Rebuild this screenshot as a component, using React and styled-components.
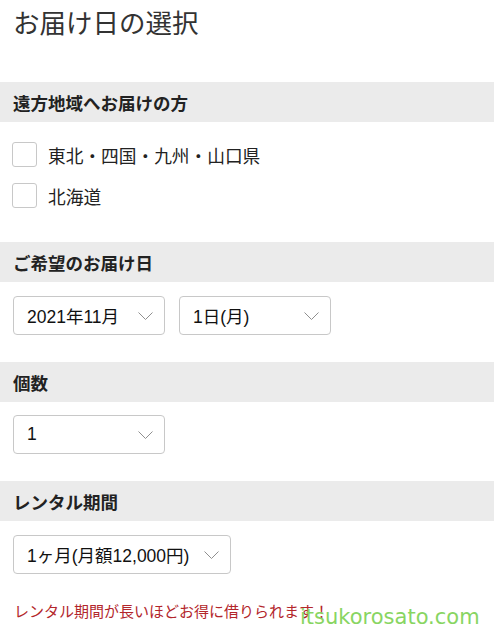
import React from "react";
import styled, { createGlobalStyle } from "styled-components";

const Global = createGlobalStyle`
  html, body { margin: 0; padding: 0; background: #fff; }
  body { font-family: "Noto Sans CJK JP", "Noto Sans", sans-serif; color: #222; }
  * { box-sizing: border-box; }
`;

const Page = styled.div`
  position: relative;
  width: 494px;
  height: 640px;
  overflow: hidden;
  background: #fff;
`;

const Title = styled.h1`
  margin: 0;
  height: 82px;
  padding: 7px 0 0 13px;
  font-size: 26.5px;
  line-height: 30px;
  font-weight: 400;
  color: #333;
  font-family: "Noto Sans CJK JP", sans-serif;
`;

const Section = styled.section`
  display: flex;
  flex-direction: column;
`;

const Header = styled.div`
  height: 40px;
  background: #ebebeb;
  display: flex;
  align-items: center;
  padding-left: 13px;
  font-size: 17.5px;
  font-weight: 700;
  color: #222;
`;

const Body = styled.div`
  padding: ${(p) => p.$pad || "14px 13px 27px"};
  display: flex;
  flex-direction: ${(p) => (p.$column ? "column" : "row")};
  gap: ${(p) => p.$gap || "14px"};
`;

const CheckRow = styled.label`
  display: flex;
  align-items: center;
  gap: 11px;
  height: 25px;
  font-size: 17.7px;
  color: #222;
`;

const Box = styled.span`
  width: 25px;
  height: 25px;
  border: 1px solid #c8c8c8;
  border-radius: 3px;
  background: #fff;
  flex: none;
`;

const Select = styled.div`
  width: ${(p) => p.$w}px;
  height: 39px;
  border: 1px solid #c8c8c8;
  border-radius: 4px;
  display: flex;
  align-items: center;
  justify-content: space-between;
  padding: 0 11px 0 13px;
  font-family: "Liberation Sans", "Noto Sans CJK JP", sans-serif;
  font-size: 17.5px;
  color: #111;
  background: #fff;
`;

const Note = styled.p`
  margin: 0;
  padding: 27px 0 0 14px;
  font-size: 15px;
  line-height: 20px;
  color: #b3262b;
`;

const Watermark = styled.div`
  position: absolute;
  left: 300px;
  top: 605px;
  font-family: "DejaVu Sans", sans-serif;
  font-size: 21px;
  color: #88d562;
`;

const Chevron = () => (
  <svg width="15" height="8" viewBox="0 0 15 8" fill="none">
    <polyline points="0.5,0.5 7.5,7.5 14.5,0.5" stroke="#8f8f8f" strokeWidth="1" />
  </svg>
);

export default function App() {
  return (
    <>
      <Global />
      <Page>
        <Title>お届け日の選択</Title>
        <Section>
          <Header>遠方地域へお届けの方</Header>
          <Body $column $pad="20px 12px 34px" $gap="16px">
            <CheckRow>
              <Box />
              東北・四国・九州・山口県
            </CheckRow>
            <CheckRow>
              <Box />
              北海道
            </CheckRow>
          </Body>
        </Section>
        <Section>
          <Header>ご希望のお届け日</Header>
          <Body>
            <Select $w={152}>
              2021年11月
              <Chevron />
            </Select>
            <Select $w={152}>
              1日(月)
              <Chevron />
            </Select>
          </Body>
        </Section>
        <Section>
          <Header>個数</Header>
          <Body $pad="13px 13px 27px">
            <Select $w={152}>
              1
              <Chevron />
            </Select>
          </Body>
        </Section>
        <Section>
          <Header>レンタル期間</Header>
          <Body $pad="14px 13px 0">
            <Select $w={218}>
              1ヶ月(月額12,000円)
              <Chevron />
            </Select>
          </Body>
        </Section>
        <Note>レンタル期間が長いほどお得に借りられます！</Note>
        <Watermark>itsukorosato.com</Watermark>
      </Page>
    </>
  );
}
